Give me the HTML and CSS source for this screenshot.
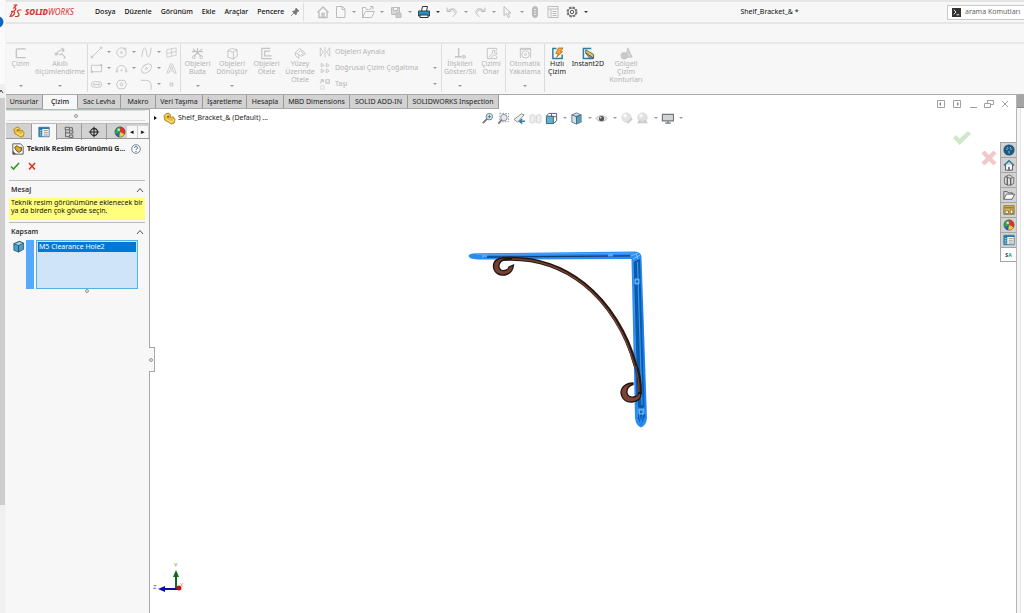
FILE: index.html
```html
<!DOCTYPE html>
<html lang="tr">
<head>
<meta charset="utf-8">
<title>Shelf_Bracket_&amp; *</title>
<link rel="stylesheet" href="styles.css">
</head>
<body>
<svg class="defs" aria-hidden="true">
  <symbol id="part" viewBox="0 0 14 14"><path d="M1 4 3 2 6 1 8 3 8 6 11 5 13 8 12 12 9 13 6 11 2 9Z" fill="#edbd35" stroke="#8d6a12" stroke-width=".7"/><path d="M3 4 6 3M4 8 9 11 12 9" stroke="#fff0a0" fill="none"/><circle cx="5.500" cy="5" r="1.200" fill="#8d6710"/></symbol>
  <symbol id="ball" viewBox="0 0 14 14"><circle cx="7" cy="7" r="6" fill="#2b62b4"/><path d="M7 7 1.500 9.500A6 6 0 0 1 7 1Z" fill="#35a548"/><path d="M7 7V1a6 6 0 0 1 5.500 8.500Z" fill="#e0352c"/><path d="M7 7 12.500 9.500A6 6 0 0 1 6 13Z" fill="#f0cd32"/><circle cx="5.500" cy="4.500" r="1.600" fill="#fff" opacity=".7"/><circle cx="7" cy="7" r="6" fill="none" stroke="#444" stroke-width=".5"/></symbol>
  <symbol id="list" viewBox="0 0 14 14"><path d="M1 1.500h12v11H1z" fill="#fff" stroke="#3c6f8c"/><path d="M1 1.500h12v2H1zM1 3h4v9.500H1z" fill="#277ba5"/><path d="M6.500 5.500h5M6.500 8h5M6.500 10.500h5" stroke="#777"/><path d="M2 5.500h2M2 8h2M2 10.500h2" stroke="#d7eefa"/></symbol>
  <symbol id="cube" viewBox="0 0 14 14"><path d="M2 4 8 1.500 12.500 3.500V10L7 13 2 11Z" fill="#4b9fc4" stroke="#1d4d66" stroke-width=".8"/><path d="M2 4 7 6 12.500 3.500 8 1.500Z" fill="#9bd3e8" stroke="#1d4d66" stroke-width=".8"/><path d="M7 6v7" stroke="#1d4d66"/></symbol>
</svg>

<div class="app">
  <aside class="gutter" aria-hidden="true">
    <div class="gutter-top"><svg viewBox="0 0 5 12"><circle cx="-2" cy="6" r="5.500" fill="#1167c0"/></svg></div>
    <div class="gutter-up"><svg viewBox="0 0 5 13"><path d="M0 8 1 6 3 9" fill="none" stroke="#444"/></svg></div>
    <div class="gutter-thumb"></div>
    <div class="gutter-rest"></div>
  </aside>

  <div class="window">
    <header class="titlebar">
      <div class="logo">
        <svg viewBox="0 0 13 14" width="13" height="14"><g fill="none" stroke="#d9302c" stroke-width="1.200"><path d="M4.500 1H7.500L5 3.800C7.500 3.600 7.500 6 4.500 7"/><path d="M3.500 7.500 1.200 12.500C4.500 12.500 6.500 9 5 7.800Q4 7 2 7.500"/><path d="M12.500 6H10.500C8.500 6 8 7.800 9.300 9 10.800 10.500 9.800 12.500 8 12.500H6"/></g></svg>
        <span class="brand"><b>SOLID</b>WORKS</span>
      </div>
      <nav class="menu">
        <a href="#">Dosya</a><a href="#">Düzenle</a><a href="#">Görünüm</a><a href="#">Ekle</a><a href="#">Araçlar</a><a href="#">Pencere</a>
      </nav>
      <button class="pin" aria-label="Sabitle"><svg viewBox="0 0 10 10" width="10" height="10"><path d="M6 1 9 4 7.500 4.500 6.500 6 6 8 2.500 4.500 4.500 4 5.500 2.500ZM1 9 4 6" fill="#777" stroke="#777" stroke-width=".8"/></svg></button>
      <div class="quick">
        <button class="ic home" aria-label="Giriş"><svg viewBox="0 0 14 14"><path d="M1.500 7.500 7 2l5.500 5.500M3 7v5.500h8V7M6 12.500V8.500h2v4" stroke-width="1.300"/></svg></button>
        <button class="ic" aria-label="Yeni"><svg viewBox="0 0 14 14"><path d="M3.500 1.500h6L12 4v8.500H3.500zM9 1.500V4.500h3"/></svg></button><i class="dn"></i>
        <button class="ic" aria-label="Aç"><svg viewBox="0 0 14 14"><path d="M1.500 12.500v-10h3l1 2h2M1.500 12.500 4.500 6.500h9l-3 6ZM8 5 12 1.500M9 1.500h3v3"/></svg></button><i class="dn"></i>
        <button class="ic" aria-label="Kaydet"><svg viewBox="0 0 14 14"><path d="M2.500 2.500h8v7h-8z" fill="#d8d8d8"/><path d="M4.500 2.500h4v3h-4z" fill="#f7f7f7"/><path d="M7 8h5v4.500H7z" fill="#ccc"/></svg></button><i class="dn"></i>
        <button class="ic" aria-label="Yazdır"><svg viewBox="0 0 14 14"><path d="M4.500 6 5.500 1.500h5L9.500 6" fill="#fff" stroke="#333"/><path d="M1.500 6h11v5h-11z" fill="#2a8fbc" stroke="#26485a"/><path d="M3 10h8v2.500H3z" fill="#fff" stroke="#333"/></svg></button><i class="dn dark"></i>
        <button class="ic" aria-label="Geri al"><svg viewBox="0 0 14 14"><path d="M2 2.500v4h4M2.500 6C6 2.500 12 3.500 11 7.500c-.5 2-2 3-3.500 4M4.500 5.500C8 4 10 5.500 9 7.500"/></svg></button><i class="dn"></i>
        <button class="ic" aria-label="Yinele"><svg viewBox="0 0 14 14"><path d="M12 2.500v4H8M11.500 6C8 2.500 2 3.500 3 7.500c.5 2 2 3 3.500 4M9.500 5.500C6 4 4 5.500 5 7.500"/></svg></button><i class="dn"></i>
        <button class="ic" aria-label="Seç"><svg viewBox="0 0 14 14"><path d="M3 1.500v9l2.200-2 2 4 1.500-.8L7 8H10Z"/></svg></button><i class="dn"></i>
        <button class="ic" aria-label="Yeniden oluştur"><svg viewBox="0 0 14 14"><rect x="3.500" y="1.500" width="5" height="11" rx="2.500" fill="#bbb"/><path d="M5 4.500h2M5 7h2M5 9.500h2" stroke="#eee"/></svg></button>
        <button class="ic gapl" aria-label="Özellikler"><svg viewBox="0 0 14 14"><path d="M2 1.500h10v11H2zM2 4h10M5 4v8.500M6.500 6.500h4M6.500 8.500h4M6.500 10.500h4"/></svg></button>
        <button class="ic gapl2" aria-label="Seçenekler"><svg viewBox="0 0 14 14"><circle cx="7" cy="7" r="4.800" stroke="#777" stroke-width="1.400" stroke-dasharray="2.400 1.370"/><circle cx="7" cy="7" r="4" stroke="#666" stroke-width=".9"/><circle cx="7" cy="7" r="1.700" stroke="#555"/></svg></button><i class="dn dark"></i>
      </div>
      <span class="doc-title">Shelf_Bracket_&amp; *</span>
      <label class="search"><svg viewBox="0 0 10 10" width="9" height="9"><path d="M0 0h10v10H0z" fill="#333"/><path d="M2 2 4.500 4.500 2 7M5 7.500h3" stroke="#fff" fill="none"/></svg><input type="text" placeholder="arama Komutları" aria-label="arama Komutları"></label>
    </header>
    <div class="strip"></div>

    <section class="ribbon">
      <div class="group g1">
        <button class="tool w29"><svg viewBox="0 0 14 14"><path d="M12.500 2H3.500Q2.500 2 2.500 3v8.500h10" stroke-width="1.400"/></svg><span>Çizim</span><i class="dn"></i></button>
        <button class="tool w50"><svg viewBox="0 0 14 14"><path d="M2 9C3 5 6 3 11 3M2 9 1 6M2 9l3-2M11 3 8 1M11 3 9 5.500M6 9l2-2 4 4-1.500 1.500" stroke-width="1.200"/></svg><span>Akıllı ölçümlendirme</span><i class="dn"></i></button>
      </div>
      <div class="group sketch">
        <button aria-label="Çizgi"><svg viewBox="0 0 14 14"><path d="M2 12 12 2"/><circle cx="2" cy="12" r="1"/><circle cx="12" cy="2" r="1"/></svg></button><i class="dn"></i>
        <button aria-label="Daire"><svg viewBox="0 0 14 14"><circle cx="7" cy="7" r="5"/><circle cx="7" cy="7" r="1"/><circle cx="11" cy="3" r="1"/></svg></button><i class="dn"></i>
        <button aria-label="Eğri"><svg viewBox="0 0 14 14"><path d="M2 12C3 0 6 0 7 7s4 7 5-5"/></svg></button><i class="dn"></i>
        <button aria-label="Düzlem"><svg viewBox="0 0 14 14"><path d="M2 4 12 2v8L2 12zM7 3v8M2 8l10-2" stroke-width=".8"/></svg></button>
        <button aria-label="Dikdörtgen"><svg viewBox="0 0 14 14"><path d="M1.500 3.500h11v7h-11z"/><circle cx="2" cy="10.500" r="1"/><circle cx="12" cy="3.500" r="1"/></svg></button><i class="dn"></i>
        <button aria-label="Yay"><svg viewBox="0 0 14 14"><path d="M2 9C2 2 12 2 12 9"/><circle cx="2" cy="10" r="1"/><circle cx="12" cy="10" r="1"/><circle cx="7" cy="9" r=".7"/></svg></button><i class="dn"></i>
        <button aria-label="Elips"><svg viewBox="0 0 14 14"><ellipse cx="7" cy="7" rx="6" ry="4" transform="rotate(-40 7 7)"/><circle cx="7" cy="7" r="1"/></svg></button><i class="dn"></i>
        <button aria-label="Metin"><svg viewBox="0 0 14 14"><path d="M2 12 6 2h2L12 12H10L9 9.500H5L4 12ZM5.500 7.500h3L7 4Z" stroke-width=".8"/></svg></button>
        <button aria-label="Yuva"><svg viewBox="0 0 14 14"><rect x="1.500" y="4" width="11" height="6" rx="3"/><circle cx="4.500" cy="7" r=".8"/><circle cx="9.500" cy="7" r=".8"/><path d="M5 7h4"/></svg></button><i class="dn"></i>
        <button aria-label="Çokgen"><svg viewBox="0 0 14 14"><path d="M4 2.500h6L12.500 7 10 11.500H4L1.500 7Z"/><circle cx="7" cy="7" r="1.500"/></svg></button><i></i>
        <button aria-label="Radyus"><svg viewBox="0 0 14 14"><path d="M1 2.500h5c4 0 6 2 6 6v4"/></svg></button><i class="dn"></i>
        <button aria-label="Nokta"><svg viewBox="0 0 14 14"><path d="M5.500 5.500h3v3h-3z"/></svg></button>
      </div>
      <div class="group">
        <button class="tool w33"><svg viewBox="0 0 14 14"><path d="M2 2 11 10M12 2 3 10M7 1v5M1 5h12" stroke-width="1.300"/><circle cx="3" cy="11" r="1.500"/><circle cx="11" cy="11" r="1.500"/></svg><span>Objeleri Buda</span><i class="dn"></i></button>
        <button class="tool w36"><svg viewBox="0 0 14 14"><path d="M2 4 6 1.500 12 3v7l-4 3-6-2ZM2 4l6 1.500L12 3M8 5.500V13"/></svg><span>Objeleri Dönüştür</span><i class="dn"></i></button>
        <button class="tool w33"><svg viewBox="0 0 14 14"><path d="M11 1.500H2v11h10.500M11 4.500H5v5h7.500" stroke-width="1.300"/></svg><span>Objeleri Ötele</span></button>
        <button class="tool w34"><svg viewBox="0 0 14 14"><path d="M1.500 6 6 1.500 12.500 7 8 10ZM1.500 6v3L5 12.500V9M5 6l2-2 3 3-2 1.500"/></svg><span>Yüzey Üzerinde Ötele</span></button>
        <div class="rows">
          <button><svg viewBox="0 0 14 14"><path d="M1.500 2v10L5 7ZM7 1v12M12.500 2v10L9 7Z"/></svg><span>Objeleri Aynala</span></button>
          <button><svg viewBox="0 0 14 14"><path d="M2.500 1.500v4L6 4ZM8.500 1.500v4L12 4ZM2.500 8v4.500L6 10.500ZM8.500 8v4.500l3.500-2Z"/></svg><span>Doğrusal Çizim Çoğaltma</span><i class="dn"></i></button>
          <button><svg viewBox="0 0 14 14"><path d="M1 6 5 2M2 2h3v3M8 2h4v4H8z" stroke-width="1.300"/><path d="M2 9h4v4H2z" stroke-dasharray="1 1"/></svg><span>Taşı</span><i class="dn"></i></button>
        </div>
      </div>
      <div class="group g4">
        <button class="tool w34"><svg viewBox="0 0 14 14"><path d="M5 1v9M1 10.500h7" stroke-width="1.400"/><path d="M8 10.500c1.500-2 3.500-2 5 0-1.500 2-3.500 2-5 0Z"/><circle cx="10.500" cy="10.500" r=".7"/></svg><span>İlişkileri Göster/Sil</span><i class="dn"></i></button>
        <button class="tool w28"><svg viewBox="0 0 14 14"><path d="M12.500 4V1.500h-10v11H12.500V10M4 11 8 7M8 7C7 4 9 3 11 4L9.500 5.500 11 7l1.500-1.500c1 3-1 4-3 3L6 12"/></svg><span>Çizimi Onar</span></button>
      </div>
      <div class="group">
        <button class="tool w38"><svg viewBox="0 0 14 14"><path d="M1.500 12V1.500h11V12M1 2.500h12"/><circle cx="7" cy="8" r="4"/><circle cx="7" cy="8" r="1"/></svg><span>Otomatik Yakalama</span><i class="dn"></i></button>
      </div>
      <div class="group last">
        <button class="tool on w24"><svg viewBox="0 0 14 14"><path d="M6 1.500H2v11h10V8" stroke="#2680a8" stroke-width="1.600"/><path d="M8 1 5 7h3L6 11l6.500-6H10L13 1Z" fill="#f7a52b" stroke="#a8531a" stroke-width=".7"/></svg><span>Hızlı Çizim</span></button>
        <button class="tool on w38"><svg viewBox="0 0 14 14"><path d="M10 1.500H1.500v11H12" stroke="#2680a8" stroke-width="1.600"/><path d="M4 3 12.500 8v4L4 6.500Z" fill="#e6cc3d" stroke="#345" stroke-width=".8"/><path d="M4 6.500 8 12h4.500Z" fill="#8aa4b0" stroke="#345" stroke-width=".6"/></svg><span>Instant2D</span></button>
        <button class="tool w38"><svg viewBox="0 0 14 14"><path d="M8.500 1 13 11H6Z" fill="#d4d4d4"/><circle cx="4.500" cy="9.500" r="3.500" fill="#c9c9c9"/></svg><span>Gölgeli Çizim Konturları</span></button>
      </div>
    </section>

    <div class="work">
      <div class="stage">
        <div class="tabbar">
          <nav class="tabs">
            <button>Unsurlar</button><button class="active">Çizim</button><button>Sac Levha</button><button>Makro</button><button>Veri Taşıma</button><button>İşaretleme</button><button>Hesapla</button><button>MBD Dimensions</button><button>SOLID ADD-IN</button><button>SOLIDWORKS Inspection</button>
          </nav>
          <div class="winctl">
            <button aria-label="Sol bölme"><svg viewBox="0 0 10 10"><path d="M1.500 1.500h7v7h-7z"/><path d="M5 3v4L3 5Z" fill="#888" stroke="none"/></svg></button>
            <button aria-label="Sağ bölme"><svg viewBox="0 0 10 10"><path d="M1.500 1.500h7v7h-7z"/><path d="M5 3v4L7 5Z" fill="#888" stroke="none"/></svg></button>
            <button aria-label="Küçült"><svg viewBox="0 0 10 10"><path d="M2 8.500h7"/></svg></button>
            <button aria-label="Geri yükle"><svg viewBox="0 0 10 10"><path d="M.5 4.500h6v4h-6zM3.500 4V1.500h6v4h-3"/></svg></button>
            <button aria-label="Kapat"><svg viewBox="0 0 10 10"><path d="M2 2l6 6M8 2 2 8"/></svg></button>
          </div>
        </div>

        <div class="lower">
          <aside class="panel">
            <div class="grip"><i class="dot"></i></div>
            <div class="ptabs">
              <button aria-label="Tasarım ağacı"><svg viewBox="0 0 14 14"><use href="#part"/></svg></button>
              <button class="active" aria-label="Özellik yöneticisi"><svg viewBox="0 0 14 14"><use href="#list"/></svg></button>
              <button aria-label="Konfigürasyonlar"><svg viewBox="0 0 14 14" fill="none" stroke="#555"><path d="M2.500 1.500h5v3h-5zM3 5v7.500H7M3 8H7M7.500 5.500h4v3h-4zM7.500 10.500h4v3h-4zM8 2h3v3"/></svg></button>
              <button aria-label="DimXpert"><svg viewBox="0 0 14 14" fill="none" stroke="#222" stroke-width="1.300"><circle cx="7" cy="7" r="4"/><path d="M7 1v12M1 7h12"/></svg></button>
              <button aria-label="Görünümler"><svg viewBox="0 0 14 14"><use href="#ball"/></svg></button>
              <div class="more"><button aria-label="Geri">◂</button><button aria-label="İleri">▸</button></div>
            </div>
            <div class="phead">
              <svg viewBox="0 0 14 14" width="12" height="12"><path d="M1 1h9l3 3v9H1z" fill="#fff" stroke="#444"/><path d="M3 5 6 3 8 5 11 5 11 9 8 11 5 9Z" fill="#dfab25" stroke="#54400d"/><path d="M1 13V9l4 4Z" fill="#555"/></svg>
              <h1>Teknik Resim Görünümü G...</h1>
              <button aria-label="Yardım"><svg viewBox="0 0 10 10" width="10" height="10"><circle cx="5" cy="5" r="4.300" fill="#fff" stroke="#47697c" stroke-width=".8"/><path d="M3.500 4C3.500 2 6.500 2 6.500 4 6.500 5 5 5 5 6M5 7v1" fill="none" stroke="#2d5e7e"/></svg></button>
            </div>
            <div class="confirm">
              <button aria-label="Tamam"><svg viewBox="0 0 10 10" width="10" height="10"><path d="M1 5.500 3.500 8 9 2" fill="none" stroke="#2f9b22" stroke-width="1.600"/></svg></button>
              <button aria-label="İptal"><svg viewBox="0 0 10 10" width="10" height="10"><path d="M2 2 8 8.500M8 2 2 8.500" stroke="#e03420" stroke-width="1.600"/></svg></button>
            </div>
            <section class="box">
              <h2>Mesaj<svg viewBox="0 0 8 6" width="8" height="6"><path d="M1 5 4 1.500 7 5"/></svg></h2>
              <p class="msg">Teknik resim görünümüne eklenecek bir ya da birden çok gövde seçin.</p>
            </section>
            <section class="box">
              <h2>Kapsam<svg viewBox="0 0 8 6" width="8" height="6"><path d="M1 5 4 1.500 7 5"/></svg></h2>
              <div class="scope">
                <svg viewBox="0 0 14 14" width="13" height="13"><use href="#cube"/></svg>
                <i class="bar"></i>
                <ul role="listbox" aria-label="Kapsam"><li role="option" aria-selected="true">M5 Clearance Hole2</li></ul>
              </div>
              <div class="foot"><i class="dot"></i></div>
            </section>
          </aside>

          <main class="canvas">
            <div class="hud">
              <button class="tree"><i class="tri"></i><svg viewBox="0 0 14 14" width="13" height="13"><use href="#part"/></svg>Shelf_Bracket_&amp; (Default) ...</button>
              <div class="views">
                <button aria-label="Sığdır"><svg viewBox="0 0 14 14"><circle cx="9" cy="5" r="3.500" fill="#e3f0f7" stroke="#687883"/><path d="M6.500 7.500 2 12" stroke="#777" stroke-width="2"/><path d="M7 5h4M9 3v4" stroke="#397b9b"/></svg></button>
                <button aria-label="Alana yakınlaştır"><svg viewBox="0 0 14 14"><path d="M3 1.500h9.500v9H3z" fill="none" stroke="#888" stroke-dasharray="1.500 1.500"/><circle cx="7.500" cy="6" r="3.500" fill="#dcebf2" stroke="#889"/><path d="M5 8.500 1.500 12.500" stroke="#777" stroke-width="1.800"/></svg></button>
                <button aria-label="Önceki görünüm"><svg viewBox="0 0 14 14"><path d="M1 8 9 2l3 1L5 11Z" fill="#eee" stroke="#888"/><path d="M13 10H8M10 7.500 7 10l3 2.500" stroke="#397b9b" stroke-width="1.500" fill="none"/></svg></button>
                <button aria-label="Kesit"><svg viewBox="0 0 14 14"><path d="M1 4 4 2.500 6.500 4v7L3.500 12 1 11ZM8 4l3-1.500L13 4v7l-3 1-2-1Z" fill="#eee" stroke="#d4d4d4"/></svg></button>
                <button aria-label="Yönlendirme"><svg viewBox="0 0 14 14"><path d="M4 1.500h8.500v8L9 12.500M4 1.500 1.500 4.500M7 1.500v9M12 5H4" fill="none" stroke="#557"/><path d="M1.500 4.500H9v8H1.500z" fill="#68aeca" stroke="#2a667f"/></svg></button><i class="dn"></i>
                <button aria-label="Görüntü stili"><svg viewBox="0 0 14 14"><path d="M2 3 7 1l5 2v8l-5 2-5-2Z" fill="#d3e2e9" stroke="#678"/><path d="M6 4l6-1v8l-5 2Z" fill="#5a9fba"/><path d="M2 3l5 2 5-2M7 5v8" stroke="#567" fill="none"/></svg></button><i class="dn"></i>
                <button aria-label="Gizle göster"><svg viewBox="0 0 14 14"><path d="M1 7C4 3 10 3 13 7 10 11 4 11 1 7Z" fill="#eee" stroke="#aaa"/><circle cx="7" cy="7" r="2.800" fill="#555"/><circle cx="6" cy="6" r="1" fill="#ddd"/></svg></button><i class="dn"></i>
                <button aria-label="Görünümü düzenle"><svg viewBox="0 0 14 14"><circle cx="7" cy="6" r="5" fill="#e4e4e4" stroke="#dadada"/><path d="M8 12 13 7" stroke="#ccc" stroke-width="2"/><circle cx="5.500" cy="4" r="2" fill="#f8f8f8"/></svg></button>
                <button aria-label="Sahne"><svg viewBox="0 0 14 14"><circle cx="7" cy="6" r="5" fill="#e0e0e0" stroke="#d6d6d6"/><path d="M1 12 4 8l3 3 3-3 3 4Z" fill="#ccc"/><circle cx="5.500" cy="4" r="2" fill="#f5f5f5"/></svg></button><i class="dn"></i>
                <button aria-label="Ekran"><svg viewBox="0 0 14 14"><path d="M1.500 2.500h12v7h-12z" fill="#ccd4d5" stroke="#777" stroke-width="1.300"/><path d="M4.500 12h6M7.500 10v2" stroke="#777" stroke-width="1.500"/></svg></button><i class="dn"></i>
              </div>
            </div>

            <svg class="bracket" viewBox="460 240 200 195" width="200" height="195" role="img" aria-label="Shelf_Bracket">
              <path d="M468.500 256Q469 253.500 476 253.300L634 251.500Q641 251.500 641.500 257L647 418Q646 426 641 427.500Q636 426 635 418L631.500 259L478 259.500Q469 259 468.500 256Z" fill="#2a8bf2"/>
              <path d="M476 254.500 634 253" stroke="#5aabfc" stroke-width=".8" fill="none"/>
              <path d="M484 257 630 255.800" stroke="#103f78" stroke-width="1.300"/>
              <path d="M633 262 640 259 645 416 641 425 637 416Z" fill="#0a5aab"/>
              <path d="M633 261 637.500 417M637.500 262 642 405" stroke="#3b96f2" stroke-width="1.200"/>
              <path d="M642 300 645 410" stroke="#1f7bdf" stroke-width="1.200"/>
              <path d="M631 256 638 253M633 259 640 255M636 254l2 5" stroke="#9acdff" stroke-width=".8"/>
              <path d="M638 407 641 424 644 407" fill="none" stroke="#2f8cf0"/>
              <path d="M502 259C532 257 560 265 584 284C609 304 627 334 635 364Q640 375 640 394" fill="none" stroke="#251713" stroke-width="4"/>
              <path d="M512 259C536 259 560 266 583 284C608 304 626 334 634 364Q639 375 639 392" fill="none" stroke="#75412f" stroke-width="1.500"/>
              <path d="M506 258C498 257 493 261 493.500 267C494 273 500 276 505 275C510 274 513 270 513.500 265L509 267C508.500 270 504 271.500 501 270C497 267 499 261 505 259.500Z" fill="#74402f" stroke="#211512" stroke-width="1.300"/>
              <path d="M633 383C626 383 621 387 621 393C622 400 627 402.500 632 402C637 401.500 641 399 641 394L639 393C638 396 633 398.500 629 396C625 393 627 386 633 384.500Z" fill="#7c4533" stroke="#211512" stroke-width="1.300"/>
              <path d="M636 366 637 396" stroke="#1b4c86" stroke-width="1.200"/>
              <path d="M635 279h4v5h-4zM639 409h5v5h-5z" fill="#3b96f2" stroke="#8cc6ff" stroke-width=".8"/>
              <circle cx="637" cy="281.500" r="1" fill="#0759a8"/><circle cx="641" cy="412" r="1" fill="#0759a8"/>
              <path d="M482 254.500h5v3h-5zM608 253.500h5v3h-5z" fill="#55a7fa"/>
            </svg>

            <svg class="triad" viewBox="0 0 36 34" width="36" height="34" aria-hidden="true">
              <path d="M23 27V13" stroke="#0b6b16" stroke-width="2"/><path d="M23 8 26 15H20Z" fill="#0b6b16"/>
              <path d="M24 27H10" stroke="#0d0da8" stroke-width="2"/><path d="M5 27 12 24v6Z" fill="#0d0da8"/>
              <circle cx="26" cy="26" r="2.500" fill="#b71414"/>
              <text x="21" y="5" fill="#4f9a58">Y</text><text x="0" y="27" fill="#3838dd">Z</text><text x="27" y="25" fill="#f07777">X</text>
            </svg>

            <div class="corner">
              <button aria-label="Onayla"><svg viewBox="0 0 18 16" width="20" height="16"><path d="M0 8 3 5 6.500 8.500 15 1 18 4 6.500 15Z" fill="#cfe8c9"/></svg></button>
              <button class="no" aria-label="Vazgeç"><svg viewBox="0 0 16 16" width="16" height="16"><path d="M3.500 1 8 5.500 12.500 1 15 3.500 10.500 8 15 12.500 12.500 15 8 10.500 3.500 15 1 12.500 5.500 8 1 3.500Z" fill="#f1c9ca" stroke="#ecbcbd" stroke-width=".8"/></svg></button>
            </div>
            <button class="split" aria-label="Bölme tutamacı"><i class="dot"></i></button>
          </main>

          <nav class="tasks">
            <button aria-label="3DEXPERIENCE"><svg viewBox="0 0 14 14"><circle cx="7" cy="7" r="6.500" fill="#1d597d"/><path d="M7 8v3M3.500 6h2M8.500 6h2M5 3.500l1 1.500M9 3.500 8 5" stroke="#9fd0e6" stroke-width="1.100"/></svg></button>
            <button aria-label="Kaynaklar"><svg viewBox="0 0 14 14"><path d="M3 7v6h8V7" fill="#fff" stroke="#444"/><path d="M1 7.500 7 2l6 5.500" fill="none" stroke="#2e7392" stroke-width="1.500"/><path d="M6 9h2v4H6z" fill="#666"/></svg></button>
            <button aria-label="Tasarım kitaplığı"><svg viewBox="0 0 14 14"><path d="M1.500 4 5 3v9.500l-3-1ZM5 4l4 1v8H5ZM9 5l3.500-1v7L9 13ZM3 3l4-2 4 2" fill="#ddd" stroke="#444" stroke-width=".8"/></svg></button>
            <button aria-label="Dosya gezgini"><svg viewBox="0 0 14 14"><path d="M1 12V3h4l1 1.500h5V6" fill="#ddd" stroke="#555"/><path d="M1 12 4 6h9.500L10.500 12Z" fill="#fff" stroke="#555"/></svg></button>
            <button aria-label="Görünüm paleti"><svg viewBox="0 0 14 14"><path d="M1 2h12v10H1z" fill="#e2b642" stroke="#8a6a23"/><path d="M2 4.500h10" stroke="#555"/><path d="M2.500 8h4v3h-4zM8.500 7h3v4h-3z" fill="#fff" stroke="#555" stroke-width=".8"/></svg></button>
            <button aria-label="Görünümler"><svg viewBox="0 0 14 14"><use href="#ball"/></svg></button>
            <button aria-label="Özel özellikler"><svg viewBox="0 0 14 14"><use href="#list"/></svg></button>
            <button class="sa" aria-label="SA"><b>S<em>A</em></b></button>
          </nav>
        </div>
      </div>
      <div class="edge"><div class="edge-tab"></div><div class="edge-body"></div></div>
    </div>
  </div>
</div>
</body>
</html>
```
FILE: styles.css
```css
* { box-sizing: border-box; }
html, body { height: 100%; }
body { margin: 0; overflow: hidden; font: 7px/8px "Noto Sans", "Open Sans", sans-serif; color: #222; background: #f7f7f7; }
button { margin: 0; padding: 0; border: 0; background: none; font: inherit; color: inherit; }
a { color: inherit; text-decoration: none; }
h1, h2, p, ul { margin: 0; padding: 0; list-style: none; }
svg { display: block; flex: none; }
.defs { position: absolute; width: 0; height: 0; }

.app { display: flex; height: 100%; }
.window { flex: 1; min-width: 0; display: flex; flex-direction: column; }

.gutter { width: 6px; display: flex; flex-direction: column; border-right: 1px solid #f4f4f4; background: #f0f0f0; }
.gutter-top { height: 84px; padding-top: 16px; background: #fafafa; }
.gutter-top svg { width: 5px; height: 12px; }
.gutter-up { height: 14px; background: #efefef; }
.gutter-up svg { width: 5px; height: 13px; }
.gutter-thumb { flex: 407; background: #cdcdcd; }
.gutter-rest { flex: 108; }

.titlebar { display: flex; align-items: center; height: 24px; border-top: 2px solid #e6e6e6; border-bottom: 2px solid #e6e6e6; flex: none; }
.logo { display: flex; align-items: center; gap: 3px; width: 85px; padding-left: 3px; color: #d9302c; flex: none; }
.logo svg { margin-bottom: 3px; }
.brand { font: italic 8px/10px "Noto Sans", sans-serif; }
.brand b { font-weight: 800; }
.menu { display: flex; width: 199px; padding-left: 4px; gap: 9px; font-weight: 500; color: #111; flex: none; }
.pin { width: 14px; height: 18px; border-right: 1px solid #ddd; flex: none; }
.quick { display: flex; align-items: center; padding-left: 11px; flex: none; }
.ic { width: 16px; height: 16px; padding: 1px; }
.ic svg { width: 14px; height: 14px; fill: none; stroke: #bcbcbc; }
.home { margin-right: 1px; }
.gapl { margin-left: 1px; }
.gapl2 { margin-left: 3px; }
.dn { width: 12px; height: 4px; flex: none; }
.dn::before { content: ""; display: block; width: 0; margin: 1px auto 0; border: 2px solid transparent; border-top-color: #999; border-bottom: 0; }
.dn.dark::before { border-top-color: #333; }
.doc-title { flex: 1; text-align: center; color: #111; }
.search { display: flex; align-items: center; gap: 4px; width: 77px; height: 15px; padding-left: 4px; border: 1px solid #c8c8c8; border-right: 0; background: #fff; flex: none; }
.search input { flex: 1; min-width: 0; padding: 0; border: 0; outline: 0; font: inherit; color: #555; background: none; }
.search input::placeholder { color: #666; opacity: 1; }
.strip { height: 20px; border-bottom: 2px solid #e8e8e8; flex: none; }

.ribbon { display: flex; height: 51px; padding-bottom: 2px; border-bottom: 1px solid #aaa; color: #b4b4b4; flex: none; }
.group { display: flex; border-right: 1px solid #dcdcdc; }
.group.last { border-right: 0; }
.g1 { width: 82px; }
.g4 { padding-left: 1px; }
.tool { display: flex; flex-direction: column; align-items: center; height: 48px; padding-top: 3px; flex: none; }
.tool svg, .sketch svg, .rows svg { fill: none; stroke: #c4c4c4; }
.tool svg { width: 13px; height: 13px; }
.tool span { height: 24px; max-width: 100%; display: flex; align-items: flex-start; justify-content: center; text-align: center; }
.tool.on { color: #1b1b1b; }
.w24 { width: 24px; } .w28 { width: 28px; } .w29 { width: 29px; } .w33 { width: 33px; } .w34 { width: 34px; }
.w36 { width: 36px; } .w38 { width: 38px; } .w50 { width: 50px; }
.sketch { display: grid; width: 93px; padding: 0 2px 0 1px; grid-template-columns: 15px 10px 15px 10px 15px 10px 15px; grid-template-rows: repeat(3, 16px); align-items: center; }
.sketch svg { width: 13px; height: 13px; margin: 0 auto; }
.sketch .dn { width: 10px; }
.rows { width: 124px; padding-left: 2px; display: grid; grid-template-rows: repeat(3, 16px); }
.rows button { display: flex; align-items: center; gap: 4px; text-align: left; }
.rows svg { width: 12px; height: 12px; }
.rows span { flex: 1; white-space: nowrap; }

.work { flex: 1; min-height: 0; display: flex; background: #fff; }
.stage { flex: 1; min-width: 0; display: flex; flex-direction: column; border-right: 1px solid #b4b4b4; }
.edge { width: 7px; display: flex; flex-direction: column; }
.edge-tab { height: 13px; background: #a5a5a8; border-bottom: 1px solid #888; }
.edge-body { flex: 1; width: 4px; background: #f5f5f5; border-right: 1px solid #e6e6e6; }

.tabbar { display: flex; justify-content: space-between; height: 14px; flex: none; }
.tabs { display: grid; grid-template-columns: 37px 35px 43px 35px 47px 44px 37px 66px 58px 91px; }
.tabs button { height: 14px; white-space: nowrap; background: #d2d2d2; border-right: 1px solid #999; border-bottom: 1px solid #aaa; color: #222; }
.tabs .active { background: #f7f7f7; border-bottom-color: #f7f7f7; font-weight: 500; }
.winctl { display: flex; gap: 6px; padding: 4px 6px 0 0; }
.winctl svg { width: 10px; height: 10px; fill: none; stroke: #a0a0a0; }
.lower { flex: 1; min-height: 0; display: flex; }

.panel { width: 144px; flex: none; background: #f7f7f7; border-right: 1px solid #a8a8a8; border-top: 1px solid #a9bcbc; }
.dot { display: block; width: 4px; height: 4px; border: 1px solid #999; border-radius: 50%; background: #e8e8e8; }
.grip { display: flex; justify-content: center; align-items: center; height: 11px; margin: 0 4px 2px 1px; border: 1px solid #ddd; border-width: 1px 0; }
.ptabs { display: grid; grid-template-columns: 26px 25px 25px 25px 42px; height: 16px; position: relative; background: #d2d2d2; border-top: 1px solid #bbb; border-bottom: 1px solid #999; }
.ptabs > button { border-right: 1px solid #999; }
.ptabs > button:nth-child(5) { padding-right: 16px; border: 0; }
.ptabs .active { height: 16px; background: #f7f7f7; }
.ptabs svg { width: 12px; height: 12px; margin: 0 auto; }
.more { position: absolute; right: 1px; bottom: 0; display: flex; background: #f7f7f7; }
.more button { width: 11px; height: 12px; border-left: 1px solid #ccc; color: #111; }
.phead { display: flex; align-items: center; gap: 3px; height: 20px; padding: 0 8px 0 6px; }
.phead h1 { flex: 1; font-size: 7px; line-height: 10px; font-weight: 700; white-space: nowrap; }
.confirm { display: flex; gap: 7px; height: 21px; padding: 0 4px; }
.confirm button { height: 13px; }
.box { margin: 0 4px 0 3px; border-top: 1px solid #bbb; }
.box h2 { display: flex; align-items: center; justify-content: space-between; height: 17px; padding: 0 1px 0 2px; font-size: 7px; font-weight: 600; color: #333; }
.box h2 svg { fill: none; stroke: #555; }
.msg { height: 22px; margin-bottom: 2px; padding: 1px 2px; background: #ffff7d; color: #111; }
.scope { display: grid; grid-template-columns: 12px 10px 104px; padding-left: 3px; height: 49px; }
.scope .bar { width: 8px; margin-left: 2px; background: #55a9ff; }
.scope ul { margin-left: 2px; padding: 1px; background: #cfe4f8; border: 1px solid #55b0e6; }
.scope li { height: 10px; padding-left: 1px; line-height: 10px; background: #0078d7; color: #fff; }
.foot { display: flex; justify-content: center; padding-left: 20px; }

.canvas { flex: 1; min-width: 0; position: relative; background: #fff; }
.hud { display: flex; padding-top: 1px; }
.tree { display: flex; align-items: center; width: 330px; height: 16px; gap: 2px; padding-left: 4px; }
.tri { width: 0; margin-right: 4px; border: 2px solid transparent; border-left: 3px solid #111; border-right: 0; }
.views { display: flex; align-items: center; }
.views button { width: 16px; height: 16px; padding: 1px; }
.views svg { width: 13px; height: 13px; }
.views .dn { width: 9px; }
.bracket { position: absolute; left: 310px; top: 131px; }
.triad { position: absolute; left: 3px; bottom: 17px; font: 6px "Open Sans", sans-serif; }
.corner { position: absolute; right: 3px; top: 21px; width: 45px; }
.corner .no { margin: 2px 0 0 29px; display: block; }
.split { position: absolute; left: -1px; top: 238px; width: 6px; height: 25px; border: 1px solid #a8a8a8; border-left: 0; background: #f7f7f7; }

.tasks { width: 16px; margin-top: 33px; flex: none; }
.tasks button { display: block; width: 16px; height: 15px; background: #d2d2d2; border: 1px solid #a5a5a5; border-width: 1px 0 0 1px; }
.tasks svg { width: 12px; height: 12px; margin: 0 auto; }
.tasks .sa { background: #fff; border-bottom-width: 1px; font-size: 5px; color: #333; }
.tasks b { font-weight: 800; }
.tasks em { font-style: normal; color: #22b39b; }
```
